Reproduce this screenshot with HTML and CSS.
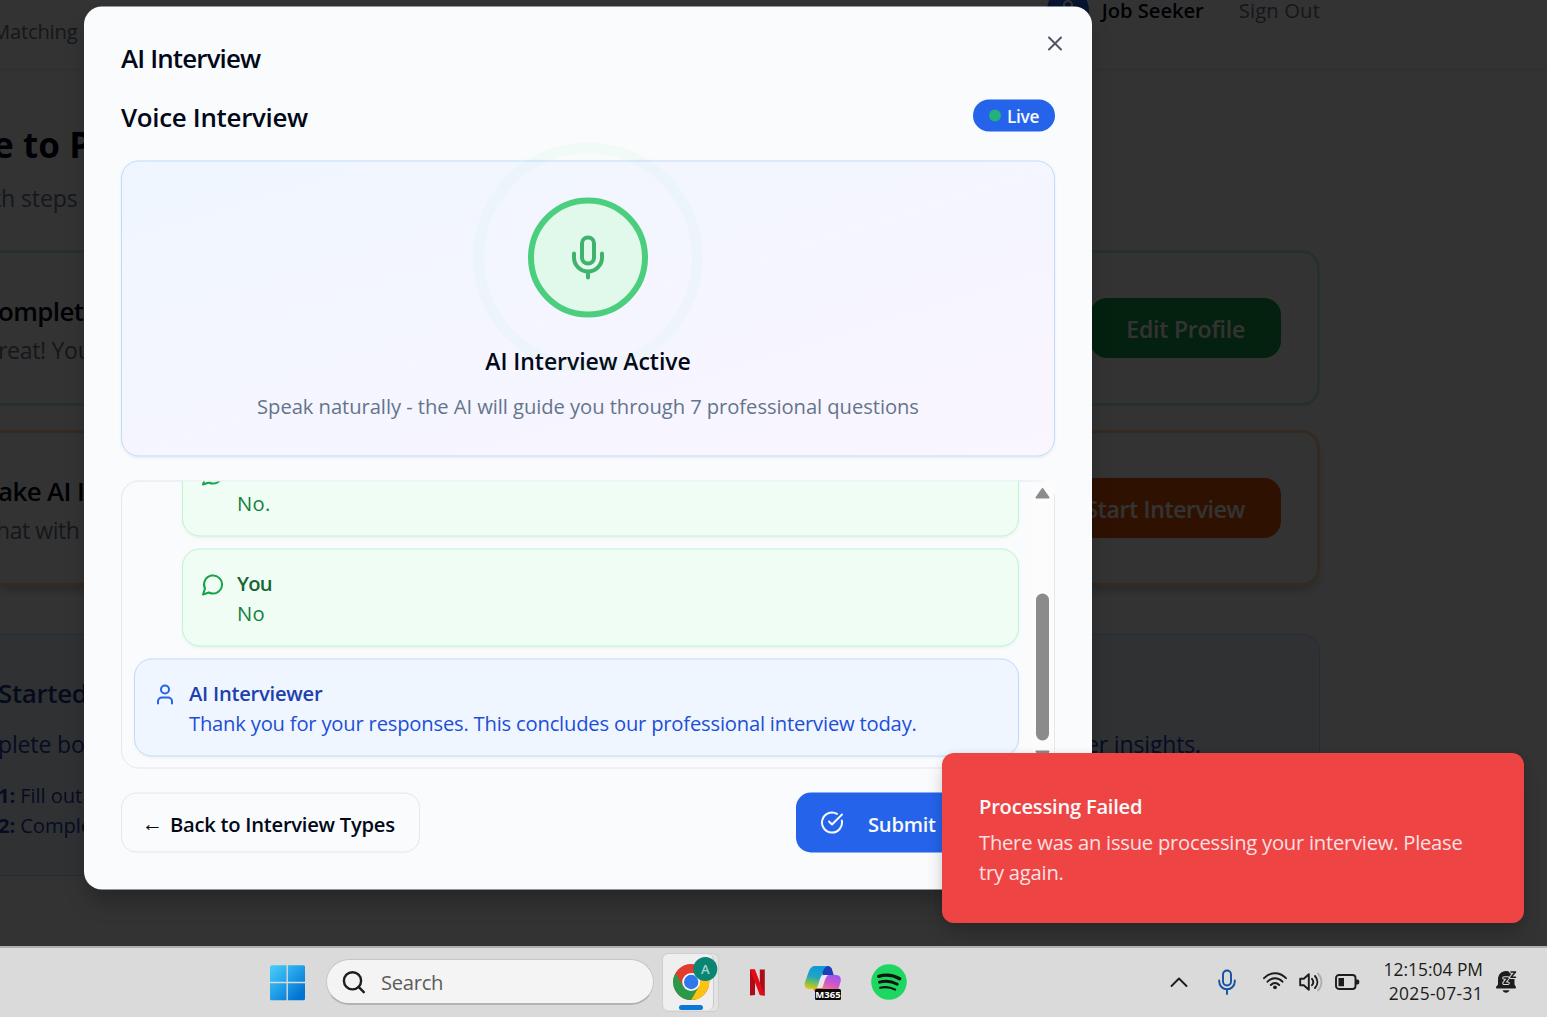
FILE: index.html
```
<!DOCTYPE html>
<html lang="en">
<head>
<meta charset="utf-8">
<title>AI Interview</title>
<link rel="stylesheet" href="styles.css">
</head>
<body>
<div class="desktop">
  <div class="viewport">
    <div class="page">
      <header class="topbar">
        <span class="nav-link">Matching</span>
        <div class="account">
          <span class="avatar"><svg width="24" height="24" viewBox="0 0 24 24" class="stroke"><path d="M19 21v-2a4 4 0 0 0-4-4H9a4 4 0 0 0-4 4v2"/><circle cx="12" cy="7" r="4"/></svg></span>
          <span class="account-name">Job Seeker</span>
          <span class="sign-out">Sign Out</span>
        </div>
      </header>
      <main class="steps">
        <h1 class="hero-title">e to P</h1>
        <p class="hero-sub">th steps</p>
        <section class="step step-done">
          <div class="step-copy"><h2>omplet</h2><p class="nudge-r">reat! You</p></div>
          <span class="step-btn btn-green">Edit Profile</span>
        </section>
        <section class="step step-next">
          <div class="step-copy"><h2 class="next-title">ake AI I</h2><p class="nudge-h">hat with</p></div>
          <span class="step-btn btn-orange">Start Interview</span>
        </section>
        <section class="guide">
          <h2>Started</h2>
          <p class="guide-lead"><span>plete bo</span><span>er insights.</span></p>
          <p class="guide-line"><b>1:</b> Fill out</p>
          <p class="guide-line"><b>2:</b> Comple</p>
        </section>
      </main>
    </div>
    <div class="overlay"></div>

    <div class="modal" role="dialog">
      <h2 class="modal-title">AI Interview</h2>
      <svg class="close" width="24" height="24" viewBox="0 0 24 24"><path d="M18 6 6 18M6 6l12 12"/></svg>
      <div class="modal-head">
        <h3>Voice Interview</h3>
        <span class="badge"><i class="dot"></i>Live</span>
      </div>
      <div class="panel">
        <div class="mic-circle">
          <span class="ring"></span>
          <svg width="48" height="48" viewBox="0 0 24 24" class="stroke"><path d="M12 2a3 3 0 0 0-3 3v7a3 3 0 0 0 6 0V5a3 3 0 0 0-3-3Z"/><path d="M19 10v2a7 7 0 0 1-14 0v-2M12 19v3"/></svg>
        </div>
        <h4>AI Interview Active</h4>
        <p>Speak naturally - the AI will guide you through 7 professional questions</p>
      </div>
      <div class="chat">
        <div class="messages">
          <div class="msg you">
            <svg width="24" height="24" viewBox="0 0 24 24" class="stroke"><path d="M7.9 20A9 9 0 1 0 4 16.1L2 22Z"/></svg>
            <div><b>You</b><p>No.</p></div>
          </div>
          <div class="msg you">
            <svg width="24" height="24" viewBox="0 0 24 24" class="stroke"><path d="M7.9 20A9 9 0 1 0 4 16.1L2 22Z"/></svg>
            <div><b>You</b><p>No</p></div>
          </div>
          <div class="msg ai">
            <svg width="24" height="24" viewBox="0 0 24 24" class="stroke"><path d="M19 21v-2a4 4 0 0 0-4-4H9a4 4 0 0 0-4 4v2"/><circle cx="12" cy="7" r="4"/></svg>
            <div><b>AI Interviewer</b><p>Thank you for your responses. This concludes our professional interview today.</p></div>
          </div>
        </div>
        <div class="scrollbar">
          <svg class="arrow" width="15" height="12" viewBox="0 0 15 12"><path d="M7.5 1.5 13.5 10h-12z"/></svg>
          <span class="thumb"></span>
          <svg class="arrow" width="15" height="12" viewBox="0 0 15 12"><path d="M7.5 10.5 13.5 2h-12z"/></svg>
        </div>
      </div>
      <div class="actions">
        <button class="btn-back"><span class="back-arrow">←</span>Back to Interview Types</button>
        <button class="btn-submit"><svg width="24" height="24" viewBox="0 0 24 24" class="stroke"><path d="M21.801 10A10 10 0 1 1 17 3.335"/><path d="m9 11 3 3L22 4"/></svg>Submit</button>
      </div>
    </div>

    <div class="toast" role="alert">
      <b>Processing Failed</b>
      <p>There was an issue processing your interview. Please<br>try again.</p>
    </div>
  </div>

  <footer class="taskbar">
    <svg class="start" width="36" height="36" viewBox="0 0 36 36">
      <defs><linearGradient id="win" x1="0" y1="0" x2="1" y2="1"><stop offset="0" stop-color="#4bcdfb"/><stop offset=".5" stop-color="#1f9de6"/><stop offset=".85" stop-color="#0474d2"/></linearGradient>
      <mask id="panes"><rect width="36" height="36" rx="1.5" fill="#fff"/><path d="M17.200 0v36M0 17.500h36" stroke="#000" stroke-width="1.4"/></mask></defs>
      <rect width="35" height="35" y=".3" rx="1.5" fill="url(#win)" mask="url(#panes)"/>
    </svg>
    <div class="search">
      <svg width="24" height="24" viewBox="0 0 24 24"><circle cx="10.5" cy="10.8" r="8.6"/><path d="m16.8 17.200 5 5"/></svg>
      <span>Search</span>
    </div>
    <div class="app-stack"><div class="app-tile">
      <svg class="chrome" width="46" height="46" viewBox="0 0 46 46">
        <circle cx="18.2" cy="27" r="18" fill="#e33b2e"/>
        <path d="M2.6 18A18 18 0 0 0 18.2 45L26 31.5 10.4 31.5Z" fill="#2a9a48"/>
        <path d="M33.8 18A18 18 0 0 1 18.2 45L26 31.5 18.2 18Z" fill="#fcc313"/>
        <circle cx="18.2" cy="27" r="9" fill="#f4f6f8"/><circle cx="18.2" cy="27" r="7.2" fill="#2f77ea"/>
        <circle cx="32.3" cy="14" r="12" fill="#0a8573"/>
        <text x="32.3" y="19" text-anchor="middle" class="profile-letter">A</text>
      </svg>
      <span class="running"></span>
    </div></div>
    <svg class="netflix" width="15" height="27" viewBox="0 0 15 27"><path d="M0 .4h5V26l-5 .6zM9.8.4h5v26.2l-5-.6z" fill="#ab0d18"/><path d="M0 .4h5l9.8 26.2-5-.6z" fill="#e50a18"/></svg>
    <svg class="m365" width="38" height="36" viewBox="0 0 38 36">
      <defs><linearGradient id="cl" x1=".4" y1="0" x2=".2" y2="1"><stop offset="0" stop-color="#1398d8"/><stop offset=".45" stop-color="#20a5c5"/><stop offset=".75" stop-color="#7fc24a"/><stop offset="1" stop-color="#e8c51b"/></linearGradient>
      <linearGradient id="cr" x1=".7" y1="0" x2=".3" y2="1"><stop offset="0" stop-color="#9a56ee"/><stop offset=".5" stop-color="#cf57c9"/><stop offset="1" stop-color="#fb7b72"/></linearGradient></defs>
      <path d="M16 2h7c3.500 0 5 2 5.500 5l1.500 5H19z" fill="#1a3fb8"/>
      <path d="M9 24h10l-4 6c-3 0-4-2-6-6z" fill="#f3702a"/>
      <path d="M11 2h14c-3 0-5 2-6 5l-4 13c-1 4-3 5-6 5H5c-4 0-5-3-4-7l4-11c1-3 3-5 6-5z" fill="url(#cl)"/>
      <path d="M22 11h-2c-2 0-3 1-4 4l-3 9h6l3-9c1-3 2-4 4-4z" fill="#e9e5ee"/>
      <path d="M26 11h6c4 0 5.500 3 4.500 7l-3 10H17l4-12c1-3 2-5 5-5z" fill="url(#cr)"/>
      <rect x="11" y="25" width="26" height="11" rx="1.500" fill="#0a0a0a"/>
      <text x="24" y="34" text-anchor="middle" class="m365-label">M365</text>
    </svg>
    <svg class="spotify" width="36" height="36" viewBox="0 0 36 36"><circle cx="18" cy="18" r="17.800" fill="#1ed760"/><g fill="none" stroke="#10150f" stroke-linecap="round"><path d="M7.700 12.300c7-2 14.600-1.300 21 2.400" stroke-width="3.400"/><path d="M8.500 18.200c6-1.700 12.300-1 17.800 2" stroke-width="2.800"/><path d="M9.200 23.700c5.200-1.200 10.200-.7 15 1.900" stroke-width="2.200"/></g></svg>

    <div class="tray">
      <svg class="t-chev" width="18" height="12" viewBox="0 0 18 12"><path d="m1.500 10 7.500-7.500L16.500 10"/></svg>
      <svg class="t-mic" width="18" height="26" viewBox="0 0 18 26"><rect x="5" y="1.500" width="8" height="15" rx="4"/><path d="M1.200 11.500v1a7.800 7.800 0 0 0 15.600 0v-1M9 20.300V25"/></svg>
      <svg class="t-wifi" width="24" height="20" viewBox="0 0 24 20"><path d="M1 7.200c6.200-6.700 15.800-6.700 22 0M4.500 10.700c4.300-4.600 10.700-4.600 15 0M7.800 14c2.500-2.600 5.900-2.600 8.400 0"/><circle cx="12" cy="16.300" r="1.900"/></svg>
      <svg class="t-vol" width="24" height="20" viewBox="0 0 24 20"><path d="M1.200 6.800h3.600l5-4.600v15.600l-5-4.600H1.200zM13 6.800c1.600 2 1.600 4.400 0 6.400M16 4c3.200 3.600 3.200 8.400 0 12"/><path class="faint" d="M19 1.500c4.600 5 4.600 12 0 17"/></svg>
      <svg class="t-bat" width="25" height="16" viewBox="0 0 25 16"><rect x="1" y="1" width="19.500" height="14" rx="3"/><path class="fill" d="M3.500 4h5.500v8.300H3.500zM21 5.500h1.500c1.500 0 1.800 1 1.800 2.500s-.3 2.500-1.800 2.500H21z"/></svg>
      <div class="clock"><span>12:15:04 PM</span><span class="date">2025-07-31</span></div>
      <svg class="t-bell" width="22" height="24" viewBox="0 0 22 24"><path class="fill" d="M2 9.500C2 4.500 5.500 1 10 1c5 0 8.500 3.500 8.500 8.500v5l1.300 2.200c.5 1-.1 1.800-1 1.800H1.200c-1 0-1.500-.9-1-1.800L2 14.500zM6.500 20.300h7c-.5 1.600-2 2.500-3.500 2.500s-3-.9-3.500-2.500z"/><path class="halo" d="M8 8h4l-4 5.200h4M15 2h4.500L15 7.200h4.500"/><path class="z" d="M8 8h4l-4 5.200h4M15 2h4.500L15 7.200h4.500"/></svg>
    </div>
  </footer>
</div>
</body>
</html>
```
FILE: styles.css
```
* { box-sizing: border-box; margin: 0; }
body {
  width: 1547px; height: 1017px; overflow: hidden;
  font: 400 20.2px/30px "Open Sans", "Noto Sans", sans-serif;
  color: #020817; letter-spacing: -0.1px; background: #333; white-space: nowrap;
}
svg { display: block; flex: none; }
.stroke { fill: none; stroke: currentColor; stroke-width: 2; stroke-linecap: round; stroke-linejoin: round; }
.desktop { display: flex; flex-direction: column; height: 1017px; }
.viewport { position: relative; height: 946px; overflow: hidden; flex: none; }

/* page behind the dialog */
.page { display: flex; flex-direction: column; height: 946px; background: #fff; }
.topbar {
  display: flex; justify-content: space-between; align-items: flex-start;
  height: 70px; padding-right: 227px; border-bottom: 1px solid #e2e8f0; flex: none;
}
.nav-link { margin: 16px 0 0 -8px; color: #64748b; letter-spacing: -.2px; }
.account { display: flex; align-items: center; height: 42px; margin-top: -11px; }
.avatar { display: flex; align-items: center; justify-content: center; width: 42px; height: 42px; border-radius: 50%; background: #2563eb; color: #fff; margin-right: 13px; }
.account-name { font-weight: 600; margin-right: 35px; letter-spacing: -.05px; }
.sign-out { color: #64748b; letter-spacing: .15px; }
.steps { display: flex; flex-direction: column; width: 1320px; padding-top: 48px; }
.hero-title { font-size: 35px; line-height: 54px; font-weight: 700; margin-left: -7px; letter-spacing: .1px; }
.hero-sub { font-size: 23px; line-height: 36px; color: #64748b; margin: 8px 0 34px -7px; }
.step {
  display: flex; align-items: center; justify-content: space-between;
  height: 156px; margin-bottom: 24px; padding-right: 36px;
  border: 3px solid #bbf7d0; border-left: 0; border-radius: 0 18px 18px 0;
}
.step-next { border-color: #fed7aa; box-shadow: 0 6px 9px -1px rgba(0,0,0,.2); }
.step h2, .guide h2 { font-size: 25.9px; line-height: 36px; font-weight: 600; letter-spacing: -.6px; }
.step-copy { padding-top: 5px; margin-left: -2px; }
.step-copy .next-title { letter-spacing: -.6px; }
.step-copy p { font-size: 23px; line-height: 36px; color: #64748b; margin-top: 3px; letter-spacing: -.3px; }
.step-copy .nudge-h { margin-left: -2px; letter-spacing: -.45px; }
.step-btn {
  height: 60px; line-height: 62px; padding: 0 36px; border-radius: 17px;
  color: #fff; font-size: 23px; font-weight: 600;
}
.btn-green { background: #16a34a; letter-spacing: -.2px; }
.btn-orange { background: #ea580c; letter-spacing: -.35px; }
.guide { height: 242px; margin-top: 24px; padding-top: 40px; background: #eff6ff; border: 1px solid #bfdbfe; border-left: 0; border-radius: 0 18px 18px 0; color: #1e40af; }
.guide h2 { color: #1e3a8a; margin-left: -2px; letter-spacing: -.35px; }
.guide-lead { display: flex; justify-content: space-between; font-size: 23px; line-height: 36px; margin: 15px 0 18px -2px; padding-right: 118px; letter-spacing: -.15px; }
.guide-line { margin-left: -2px; }

.overlay { position: absolute; inset: 0; background: rgba(0,0,0,.8); }

/* dialog */
.modal {
  position: absolute; left: 84px; top: 448px; width: 1008px; height: 883px;
  transform: translateY(-50%);
  display: flex; flex-direction: column; padding: 37px;
  background: #f9fbfd; border-radius: 18px; box-shadow: 0 15px 22px -4px rgba(0,0,0,.25);
}
.modal-title { font-size: 25.9px; line-height: 29px; height: 27px; font-weight: 600; letter-spacing: -.85px; }
.close { position: absolute; left: 959px; top: 25px; stroke: #4f5663; stroke-width: 2; stroke-linecap: round; fill: none; }
.modal-head { display: flex; justify-content: space-between; height: 32px; margin: 29px 0; }
.modal-head h3 { font-size: 25.9px; line-height: 35px; font-weight: 600; letter-spacing: -.3px; }
.badge { display: flex; align-items: center; gap: 6px; width: 82px; height: 32px; padding: 2px 0 0 16px; border-radius: 16px; background: #2563eb; color: #f8fafc; font-size: 17.3px; font-weight: 600; letter-spacing: -.3px; }
.dot { width: 12px; height: 12px; margin-top: -3px; border-radius: 50%; background: #22b07d; }
.panel {
  display: flex; flex-direction: column; align-items: center; height: 296px; padding-top: 36px; flex: none;
  border: 1px solid #bfdbfe; border-radius: 18px;
  background: linear-gradient(to bottom right, #eff6ff, #faf5ff);
  box-shadow: 0 1px 3px rgba(0,0,0,.07);
}
.mic-circle { position: relative; display: flex; align-items: center; justify-content: center; width: 120px; height: 120px; border: 6px solid #4bce7d; border-radius: 50%; background: #e1f9ea; color: #3fb26c; }
.ring { position: absolute; inset: -61px; border: 11.800px solid rgba(74,222,128,.038); border-radius: 50%; }
.panel h4 { font-size: 23px; line-height: 36px; font-weight: 600; margin-top: 25px; letter-spacing: -.06px; }
.panel p { color: #64748b; margin-top: 12px; letter-spacing: -.06px; }

.chat { display: flex; height: 288px; margin: 24px 0; border: 1px solid #e2e8f0; border-radius: 18px; flex: none; }
.messages { display: flex; flex-direction: column; justify-content: flex-end; gap: 12px; flex: 1; padding: 0 12px 11.500px; overflow: hidden; }
.msg { display: flex; gap: 12px; height: 98px; padding: 18.500px 18px 0; border: 1px solid; border-radius: 18px; flex: none; box-shadow: 0 1px 3px rgba(0,0,0,.05); }
.msg svg { margin-top: 5px; }
.msg b { display: block; font-weight: 600; letter-spacing: -.25px; }
.msg p { letter-spacing: -.2px; }
.you { margin-left: 48px; border-color: #bbf7d0; background: #f0fdf4; color: #16a34a; }
.you b { color: #166534; letter-spacing: -.7px; }
.you p { color: #15803d; letter-spacing: .3px; }
.ai { border-color: #bfdbfe; background: #eff6ff; color: #2563eb; }
.ai b { color: #1e40af; }
.ai p { color: #1d4ed8; }
.scrollbar { display: flex; flex-direction: column; align-items: center; width: 23px; background: #fcfcfc; padding-top: 6px; }
.arrow { fill: #8b8b8b; stroke: #8b8b8b; stroke-width: 2; stroke-linejoin: round; }
.thumb { width: 13px; height: 147px; margin: 94px 0 9px; border-radius: 7px; background: #8b8b8b; }

.actions { display: flex; justify-content: space-between; }
.actions button { display: flex; align-items: center; height: 60px; padding: 2px 0 0 24px; border-radius: 15px; font: inherit; font-weight: 600; letter-spacing: -.26px; }
.btn-back { width: 299px; border: 1px solid #e2e8f0; background: #f9fbfd; color: #020817; }
.back-arrow { width: 28px; margin-left: -4px; text-align: left; font: 400 21px/30px "Liberation Sans", sans-serif; }
.btn-submit { width: 259px; gap: 24px; border: 0; background: #2563eb; color: #f8fafc; }
.btn-submit svg { margin-top: -2px; }

.toast {
  position: absolute; left: 942px; top: 753px; width: 582px; height: 170px; padding: 38px 37px 0;
  border-radius: 12px; background: #ef4444; color: #f8fafc; box-shadow: 0 12px 20px -3px rgba(0,0,0,.2), 0 0 8px rgba(0,0,0,.08);
}
.toast b { display: block; font-weight: 600; letter-spacing: -.25px; }
.toast p { margin-top: 6px; color: #fbe0e2; letter-spacing: -.24px; }

/* system taskbar */
.taskbar { display: flex; align-items: flex-start; height: 71px; border-top: 2px solid #b1afb1; background: #dadada; padding: 0 29px 0 270px; }
.start { margin: 17px 20px 0 0; }
.search { display: flex; align-items: center; gap: 15px; width: 328px; height: 46px; margin: 11px 8px 0 0; padding: 0 0 2px 15px; border: 1.500px solid #c6c6c6; border-bottom: 2px solid #b3b3b3; border-radius: 23px; background: #f4f4f4; color: #5c5c5c; letter-spacing: -.3px; }
.search svg { fill: none; stroke: #1d1d1d; stroke-width: 2.400; stroke-linecap: round; margin-top: 2px; }
.search span { padding-top: 2px; }
.app-stack { width: 57px; height: 59px; margin: 5px 31px 0 0; padding-right: 5px; border: 1.500px solid #cfcfcf; border-radius: 6px; background: #e3e3e3; }
.app-tile { display: flex; flex-direction: column; align-items: center; width: 51px; height: 56px; border-radius: 6px; background: #efefef; border-right: 1px solid #c9c9c9; }
.chrome { position: relative; z-index: 1; margin: 1px -15px 0 0; }
.profile-letter { font: 600 13px "Open Sans", sans-serif; fill: #9fdacb; }
.running { width: 24px; height: 5px; margin: 4px 0 0 6px; border-radius: 3px; background: #0a78d4; }
.netflix { margin: 21px 39px 0 0; }
.m365 { margin: 16px 29px 0 0; }
.m365-label { font: 700 9.500px "Open Sans", sans-serif; fill: #fff; letter-spacing: 0; }
.spotify { margin-top: 16px; }
.tray { display: flex; margin-left: auto; }
.tray svg { fill: none; stroke: #1c1c1c; stroke-width: 1.900; stroke-linecap: round; stroke-linejoin: round; }
.tray .fill, .tray .t-wifi circle { fill: #1c1c1c; stroke: none; }
.t-chev { margin: 28px 30px 0 0; }
.tray .t-mic { margin: 21px 27px 0 0; stroke: #1450a3; }
.t-wifi { margin: 23px 12px 0 0; }
.t-vol { margin: 24px 12px 0 0; }
.tray .faint { stroke: #b0b0b0; }
.t-bat { margin: 26px 24px 0 0; }
.clock { display: flex; flex-direction: column; align-items: flex-end; width: 99px; margin: 9px 13px 0 0; font-size: 17.400px; line-height: 24px; color: #1c1c1c; letter-spacing: 0; }
.date { letter-spacing: .35px; }
.t-bell { margin-top: 22px; }
.tray .halo { stroke: #dadada; stroke-width: 3.600; }
.tray .z { stroke-width: 1.500; }
```
